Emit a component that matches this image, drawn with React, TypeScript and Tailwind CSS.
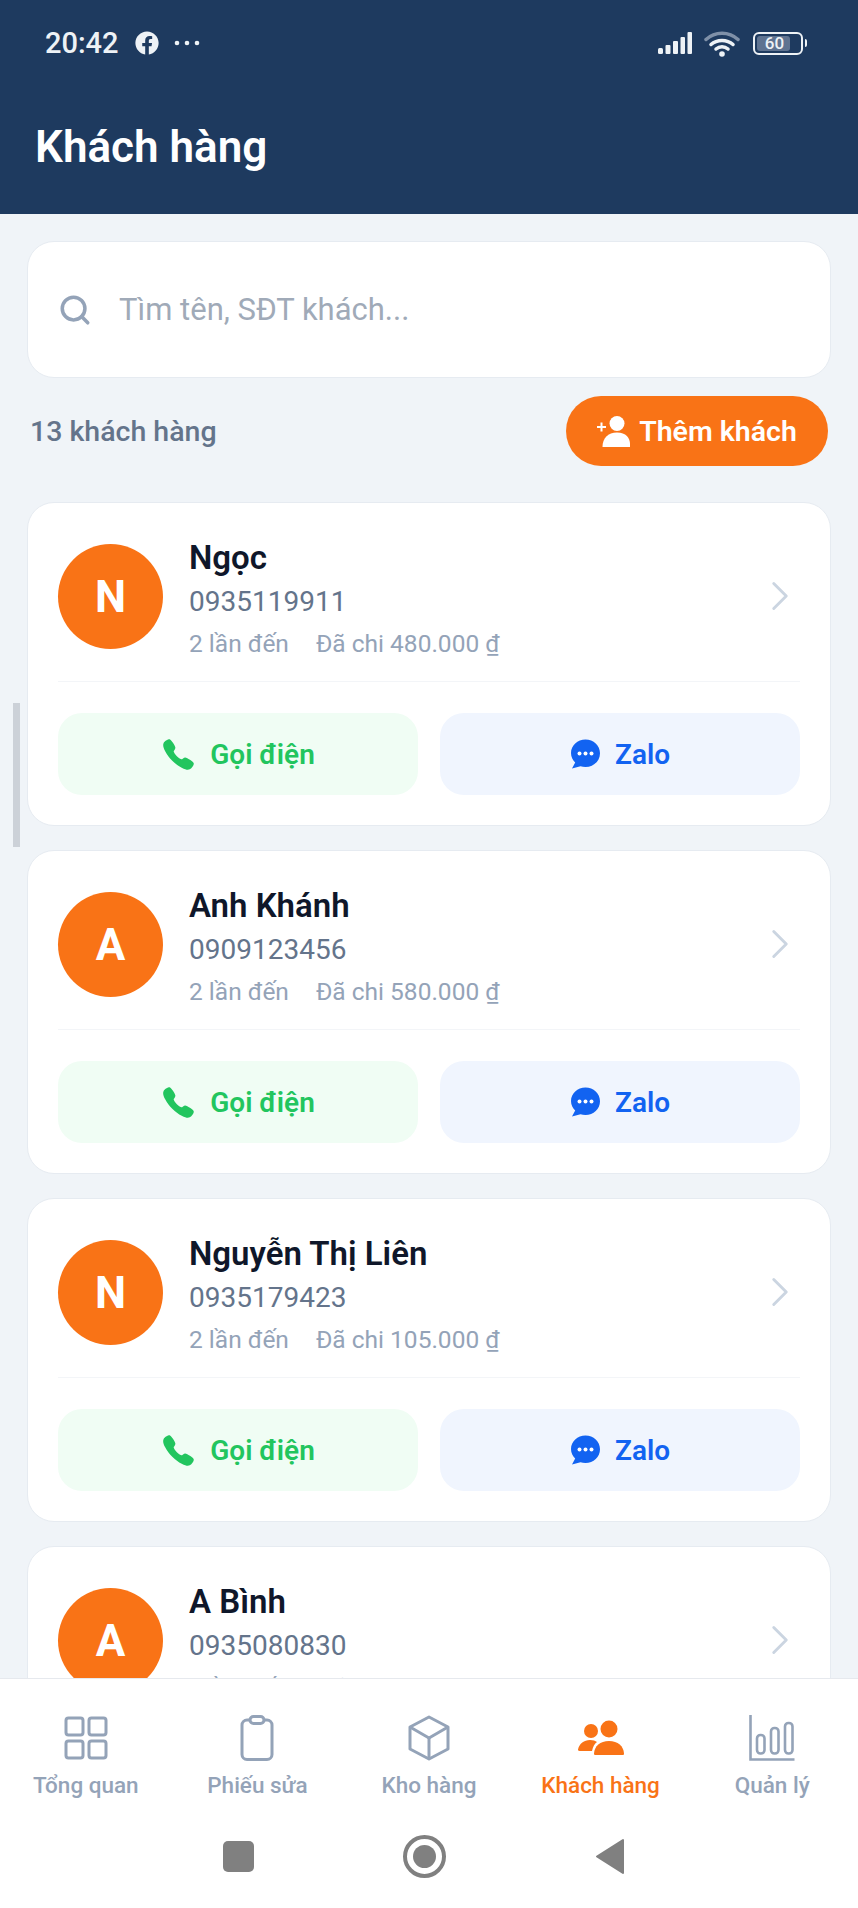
import React from 'react';
import { Search, ChevronRight } from 'lucide-react';
import { FaFacebook } from 'react-icons/fa';
import { IoCall } from 'react-icons/io5';

const customers = [
  { name: 'Ngọc', phone: '0935119911', visits: '2 lần đến', spent: 'Đã chi 480.000 ₫' },
  { name: 'Anh Khánh', phone: '0909123456', visits: '2 lần đến', spent: 'Đã chi 580.000 ₫' },
  { name: 'Nguyễn Thị Liên', phone: '0935179423', visits: '2 lần đến', spent: 'Đã chi 105.000 ₫' },
  { name: 'A Bình', phone: '0935080830', visits: '2 lần đến', spent: 'Đã chi 250.000 ₫' },
];

const StatusBar = () => (
  <div className="flex h-[36px] items-center justify-between pl-[45px] pr-[51px] text-white">
    <div className="flex items-center">
      <span className="text-[29px] font-medium leading-none text-[#eef2f6]">20:42</span>
      <FaFacebook className="ml-[16px] text-[#eef2f6]" size={24} />
      <svg className="ml-[15px]" width="26" height="6" viewBox="0 0 26 6" fill="#eef2f6">
        <circle cx="3" cy="3" r="2.3" />
        <circle cx="13" cy="3" r="2.3" />
        <circle cx="23" cy="3" r="2.3" />
      </svg>
    </div>
    <div className="flex items-center">
      <svg width="35" height="22" viewBox="0 0 35 22" fill="#eef2f6">
        <rect x="0" y="16" width="5" height="6" rx="1.5" />
        <rect x="7.5" y="13" width="5" height="9" rx="1" />
        <rect x="15" y="9" width="5" height="13" rx="1" />
        <rect x="22.5" y="5" width="4.5" height="17" rx="1" />
        <rect x="29.5" y="0" width="4.5" height="22" rx="1" />
      </svg>
      <svg className="ml-[11px]" width="36" height="27" viewBox="0 0 36 27" fill="none" strokeLinecap="round">
        <path d="M2 9.5C11 1 25 1 34 9.5" stroke="#7f90a8" strokeWidth="3.5" />
        <path d="M7 14.5C13 9 23 9 29 14.5" stroke="#eef2f6" strokeWidth="3.5" />
        <path d="M12 19C15.5 16 20.5 16 24 19" stroke="#eef2f6" strokeWidth="3.5" />
        <circle cx="18" cy="24" r="2.8" fill="#eef2f6" />
      </svg>
      <div className="ml-[13px] flex items-center">
        <div className="relative h-[23px] w-[50px] overflow-hidden rounded-[6px] border-[2px] border-[#eef2f6] p-[2px]">
          <div className="h-full w-[33px] rounded-[3px] bg-[#5f7391]" />
          <span className="absolute inset-0 flex items-center justify-center pr-[6px] text-[17px] font-medium leading-none text-[#eef2f6]">60</span>
        </div>
        <div className="ml-[2px] h-[8px] w-[2.5px] rounded-r-sm bg-[#eef2f6]" />
      </div>
    </div>
  </div>
);

const AddUserIcon = () => (
  <svg width="33" height="31" viewBox="0 0 33 31" fill="white">
    <circle cx="20" cy="7.5" r="7.5" />
    <path d="M5.5 31C5.5 22 11 16.5 20 16.5S33 22 33 28V31H5.5Z" />
    <rect x="0" y="10" width="9" height="2" />
    <rect x="3.5" y="6.5" width="2" height="9" />
  </svg>
);

const ZaloIcon = () => (
  <svg width="30" height="30" viewBox="0 0 30 30">
    <path d="M15.5 0.5C7.5 0.5 1 6.5 1 14C1 17.8 2.6 21.2 5.2 23.6L2 29.5L10.5 27.2C12 27.7 13.7 28 15.5 28C23.5 28 30 22 30 14.2C30 6.5 23.5 0.5 15.5 0.5Z" fill="#1263f1" />
    <circle cx="9.5" cy="14.5" r="2" fill="white" />
    <circle cx="15.5" cy="14.5" r="2" fill="white" />
    <circle cx="21.5" cy="14.5" r="2" fill="white" />
  </svg>
);

const CustomerCard = ({ customer }: { customer: (typeof customers)[number] }) => (
  <div className="shrink-0 rounded-[27px] border border-[#e6ebf1] bg-white px-[30px]">
    <div className="flex items-start border-b border-[#f3f5f8] pb-[32px] pt-[41px]">
      <div className="flex h-[105px] w-[105px] shrink-0 items-center justify-center rounded-full bg-[#f97316] text-[44px] font-bold text-white">
        {customer.name.charAt(0)}
      </div>
      <div className="ml-[26px] mt-[-6px] h-[110px] flex-1">
        <div className="text-[33px] font-semibold leading-[40px] text-[#0f172a]">{customer.name}</div>
        <div className="mt-[5px] text-[28px] leading-[38px] text-[#64748b]">{customer.phone}</div>
        <div className="mt-[7px] flex gap-[27px] text-[24.5px] leading-[32px] text-[#94a3b8]">
          <span>{customer.visits}</span>
          <span>{customer.spent}</span>
        </div>
      </div>
      <ChevronRight className="mr-[-5px] mt-[27px] text-[#cbd5e1]" size={50} strokeWidth={1.4} />
    </div>
    <div className="flex gap-[22px] pb-[30px] pt-[31px]">
      <button className="flex h-[82px] flex-1 items-center justify-center gap-[14px] rounded-[24px] bg-[#f0fdf4] text-[28px] font-semibold text-[#22c55e]">
        <IoCall size={35} />
        <span className="pt-[2px]">Gọi điện</span>
      </button>
      <button className="flex h-[82px] flex-1 items-center justify-center gap-[15px] rounded-[24px] bg-[#f0f5fe] text-[28px] font-semibold text-[#1263f1]">
        <ZaloIcon />
        <span className="pt-[2px]">Zalo</span>
      </button>
    </div>
  </div>
);

const GridIcon = () => (
  <svg width="44" height="44" viewBox="0 0 44 44" fill="none" stroke="#94a3b8" strokeWidth="3">
    <rect x="2" y="2" width="17" height="17" rx="2.5" />
    <rect x="25" y="2" width="17" height="17" rx="2.5" />
    <rect x="2" y="25" width="17" height="17" rx="2.5" />
    <rect x="25" y="25" width="17" height="17" rx="2.5" />
  </svg>
);

const ClipboardIcon = () => (
  <svg width="44" height="46" viewBox="0 0 44 46" fill="none" stroke="#94a3b8" strokeWidth="3">
    <rect x="7" y="5" width="30" height="39.5" rx="5" />
    <rect x="15" y="1.5" width="14" height="7" rx="3.5" fill="white" />
  </svg>
);

const BoxIcon = () => (
  <svg width="44" height="46" viewBox="0 0 44 46" fill="none" stroke="#94a3b8" strokeWidth="3" strokeLinejoin="round">
    <path d="M22 2L41 12V34L22 44L3 34V12L22 2Z" />
    <path d="M3 12L22 23L41 12" />
    <path d="M22 23V44" />
  </svg>
);

const PeopleIcon = () => (
  <svg width="46" height="46" viewBox="0 0 46 46" fill="#f97316">
    <circle cx="13" cy="16" r="7" />
    <circle cx="31" cy="14" r="8.5" />
    <path d="M0 34.5C1.5 28.5 6 25 12 25C15 25 17.5 25.7 19 27C16.5 29 15 31.5 14 36H1.5C0.5 36 -0.2 35.5 0 34.5Z" />
    <path d="M16 38.5C16.5 31 22 26 31 26C40 26 45.5 31 46 38.5C46 39.5 45.5 40 44.5 40H17.5C16.5 40 16 39.5 16 38.5Z" />
  </svg>
);

const ChartIcon = () => (
  <svg width="46" height="46" viewBox="0 0 46 46" fill="none" stroke="#94a3b8" strokeWidth="2.6">
    <path d="M1.5 0V44.5H45.5" />
    <rect x="8" y="20" width="7.5" height="18.5" rx="3.5" />
    <rect x="22" y="13" width="7.5" height="25.5" rx="3.5" />
    <rect x="36" y="8" width="7.5" height="30.5" rx="3.5" />
  </svg>
);

const tabs = [
  { label: 'Tổng quan', icon: <GridIcon /> },
  { label: 'Phiếu sửa', icon: <ClipboardIcon /> },
  { label: 'Kho hàng', icon: <BoxIcon /> },
  { label: 'Khách hàng', icon: <PeopleIcon />, active: true },
  { label: 'Quản lý', icon: <ChartIcon /> },
];

export default function App() {
  return (
    <div className="relative flex h-[1908px] w-[858px] flex-col overflow-hidden bg-[#f0f4f8] [font-family:Roboto,sans-serif]">
      <header className="h-[214px] shrink-0 bg-[#1e3a5f] pt-[25px]">
        <StatusBar />
        <h1 className="mt-[58px] pl-[35px] text-[44px] font-semibold leading-[56px] text-white">Khách hàng</h1>
      </header>

      {/* Scrollbar overlay */}
      <div className="absolute left-[13px] top-[703px] h-[144px] w-[7px] bg-[#ccd1d8]" />

      <main className="flex min-h-0 flex-1 flex-col overflow-hidden px-[27px] pt-[27px]">
        <div className="flex h-[137px] shrink-0 items-center rounded-[27px] border border-[#e6ebf1] bg-white pl-[30px]">
          <Search className="text-[#94a3b8]" size={34} strokeWidth={2.5} />
          <span className="ml-[27px] pt-[2px] text-[31px] text-[#a0aab8]">Tìm tên, SĐT khách...</span>
        </div>

        <div className="mt-[18px] flex shrink-0 items-center justify-between pl-[3px] pr-[3px]">
          <span className="pt-[3px] text-[28.5px] font-medium text-[#64748b]">13 khách hàng</span>
          <button className="flex h-[70px] w-[262px] items-center justify-center gap-[9px] rounded-full bg-[#f97316] text-[28.5px] font-semibold text-white">
            <AddUserIcon />
            <span className="pt-[2px]">Thêm khách</span>
          </button>
        </div>

        <div className="mt-[36px] flex flex-col gap-[24px]">
          {customers.map((customer) => (
            <CustomerCard key={customer.name} customer={customer} />
          ))}
        </div>
      </main>

      <nav className="z-10 h-[230px] shrink-0 border-t border-[#e6e9ee] bg-white">
        <div className="grid grid-cols-5 pt-[36px]">
          {tabs.map((tab) => (
            <div key={tab.label} className="flex flex-col items-center">
              <div className="flex h-[46px] items-center justify-center">{tab.icon}</div>
              <span className={`mt-[10px] text-[22.5px] font-medium leading-[28px] ${tab.active ? 'text-[#f97316]' : 'text-[#94a3b8]'}`}>
                {tab.label}
              </span>
            </div>
          ))}
        </div>
        <div className="mt-[36px] flex items-center justify-center gap-[149px] pr-[10px]">
          <div className="h-[31px] w-[31px] rounded-[5px] bg-[#808080]" />
          <div className="flex h-[43px] w-[43px] items-center justify-center rounded-full border-[4px] border-[#808080]">
            <div className="h-[23px] w-[23px] rounded-full bg-[#808080]" />
          </div>
          <svg width="30" height="37" viewBox="0 0 30 37" fill="#808080" stroke="#808080" strokeWidth="2" strokeLinejoin="round">
            <path d="M28 2V35L2 18.5Z" />
          </svg>
        </div>
      </nav>
    </div>
  );
}
